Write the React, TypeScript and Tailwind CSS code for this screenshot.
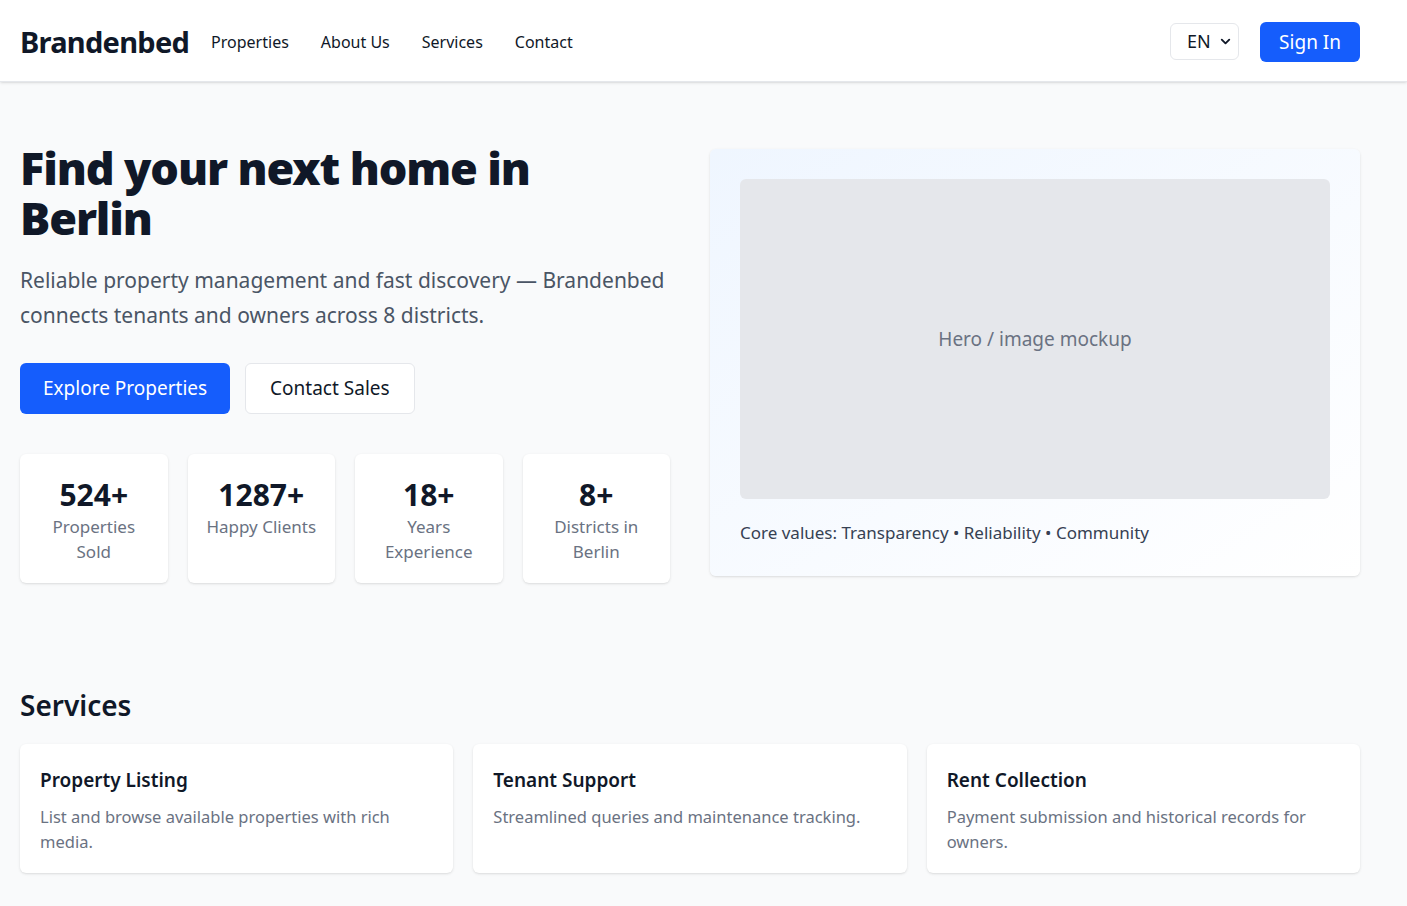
import { ChevronDown } from "lucide-react";

const stats = [
  { value: "524+", label: "Properties Sold" },
  { value: "1287+", label: "Happy Clients" },
  { value: "18+", label: "Years Experience" },
  { value: "8+", label: "Districts in Berlin" },
];

const services = [
  { title: "Property Listing", text: "List and browse available properties with rich media." },
  { title: "Tenant Support", text: "Streamlined queries and maintenance tracking." },
  { title: "Rent Collection", text: "Payment submission and historical records for owners." },
];

export default function App() {
  return (
    <div className="min-h-screen bg-gray-50 text-gray-900 font-['Noto_Sans',sans-serif]">
      {/* Header */}
      <header className="h-[82px] border-b border-gray-200 bg-white shadow-sm">
        <div className="flex h-full max-w-[1380px] items-center justify-between px-5 pt-[2px]">
          <div className="flex items-center">
            <span className="text-[29px] font-bold tracking-tight text-gray-900">Brandenbed</span>
            <nav className="ml-[22px] flex items-center gap-[32px] text-[16px] text-gray-900">
              <a href="#">Properties</a>
              <a href="#">About Us</a>
              <a href="#">Services</a>
              <a href="#">Contact</a>
            </nav>
          </div>

          <div className="flex items-center gap-[21px]">
            <div className="flex h-[37px] w-[69px] items-center justify-between rounded-md border border-gray-200 bg-white pl-4 pr-[5px] text-[18px]">
              EN
              <ChevronDown size={15} strokeWidth={3} />
            </div>
            <button type="button" className="h-10 rounded-md bg-[#155dfc] px-[19px] pt-[2px] text-[19px] text-white">
              Sign In
            </button>
          </div>
        </div>
      </header>

      {/* Hero */}
      <main className="max-w-[1380px] px-5">
        <section className="grid grid-cols-2 gap-10 pt-[61px]">
          <div>
            <h1 className="text-[45px] font-black leading-[50px] tracking-tight">
              Find your next home in Berlin
            </h1>
            <p className="mt-5 text-[21px] leading-[35px] text-gray-600">
              Reliable property management and fast discovery — Brandenbed connects tenants and owners across 8 districts.
            </p>
            <div className="mt-[30px] flex gap-[15px]">
              <button type="button" className="h-[51px] rounded-md bg-[#155dfc] px-[23px] text-[19px] text-white">
                Explore Properties
              </button>
              <button type="button" className="h-[51px] rounded-md border border-gray-200 bg-white px-[24px] text-[19px] text-gray-900">
                Contact Sales
              </button>
            </div>
            <div className="mt-10 grid grid-cols-4 gap-5">
              {stats.map((s) => (
                <div key={s.value} className="flex h-[129px] flex-col items-center rounded-md bg-white px-4 pt-[22px] text-center shadow-sm">
                  <div className="text-[30px] font-bold leading-[38px]">{s.value}</div>
                  <div className="text-[17px] leading-[25px] text-gray-500">{s.label}</div>
                </div>
              ))}
            </div>
          </div>

          <div className="mt-[6px] self-start rounded-md bg-gradient-to-br from-blue-50 to-white p-[30px] shadow-sm">
            <div className="flex h-[320px] items-center justify-center rounded-md bg-gray-200 text-[19px] text-gray-500">
              Hero / image mockup
            </div>
            <p className="mt-5 text-[17px] leading-[27px] text-gray-700">
              Core values: Transparency • Reliability • Community
            </p>
          </div>
        </section>

        {/* Services */}
        <section className="pt-[102px] pb-20">
          <h2 className="text-[28px] font-semibold leading-[40px]">Services</h2>
          <div className="mt-[19px] grid grid-cols-3 gap-5">
            {services.map((s) => (
              <div key={s.title} className="h-[129px] rounded-md bg-white p-5 shadow-sm">
                <h3 className="mt-[2px] text-[19px] font-semibold leading-[28px]">{s.title}</h3>
                <p className="mt-[10px] text-[16.5px] leading-[25px] text-gray-500">{s.text}</p>
              </div>
            ))}
          </div>
        </section>
      </main>
    </div>
  );
}
